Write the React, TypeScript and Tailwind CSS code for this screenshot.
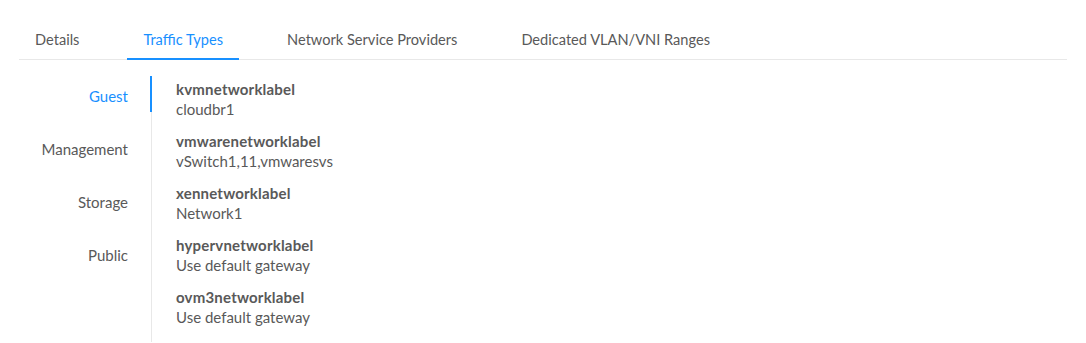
const tabs = ['Details', 'Traffic Types', 'Network Service Providers', 'Dedicated VLAN/VNI Ranges'];

const trafficTypes = ['Guest', 'Management', 'Storage', 'Public'];

const labels: Array<{ name: string; value: string }> = [
  { name: 'kvmnetworklabel', value: 'cloudbr1' },
  { name: 'vmwarenetworklabel', value: 'vSwitch1,11,vmwaresvs' },
  { name: 'xennetworklabel', value: 'Network1' },
  { name: 'hypervnetworklabel', value: 'Use default gateway' },
  { name: 'ovm3networklabel', value: 'Use default gateway' },
];

export default function App() {
  return (
    <div className="min-h-[343px] bg-white pt-[16px] font-['Lato',sans-serif] text-[15px] text-[#595959]">
      <div className="mx-[19px] flex border-b border-[#e8e8e8] text-[14.6px]">
        {tabs.map((tab, i) => (
          <div
            key={tab}
            className={`-mb-px mr-[32px] border-b-2 px-[16px] pt-[12px] pb-[6px] leading-[24px] ${
              i === 1 ? 'border-[#1890ff] text-[#1890ff]' : 'border-transparent'
            }`}
          >
            {tab}
          </div>
        ))}
      </div>

      <div className="mx-[19px] mt-[16px] flex">
        <div className="flex w-[133px] flex-col gap-[17px] border-r border-[#e8e8e8]">
          {trafficTypes.map((type, i) => (
            <div
              key={type}
              className={`-mr-px h-[36px] border-r-2 pt-[4px] pr-[22px] text-right leading-[32px] ${
                i === 0 ? 'border-[#1890ff] text-[#1890ff]' : 'border-transparent'
              }`}
            >
              {type}
            </div>
          ))}
          <div className="h-[54px]" />
        </div>

        <div className="flex flex-col gap-[12px] pt-[3px] pl-[24px]">
          {labels.map((item) => (
            <div key={item.name} className="leading-[20px]">
              <div className="font-bold tracking-[0.2px] text-[#595959]">{item.name}</div>
              <div>{item.value}</div>
            </div>
          ))}
        </div>
      </div>
    </div>
  );
}
